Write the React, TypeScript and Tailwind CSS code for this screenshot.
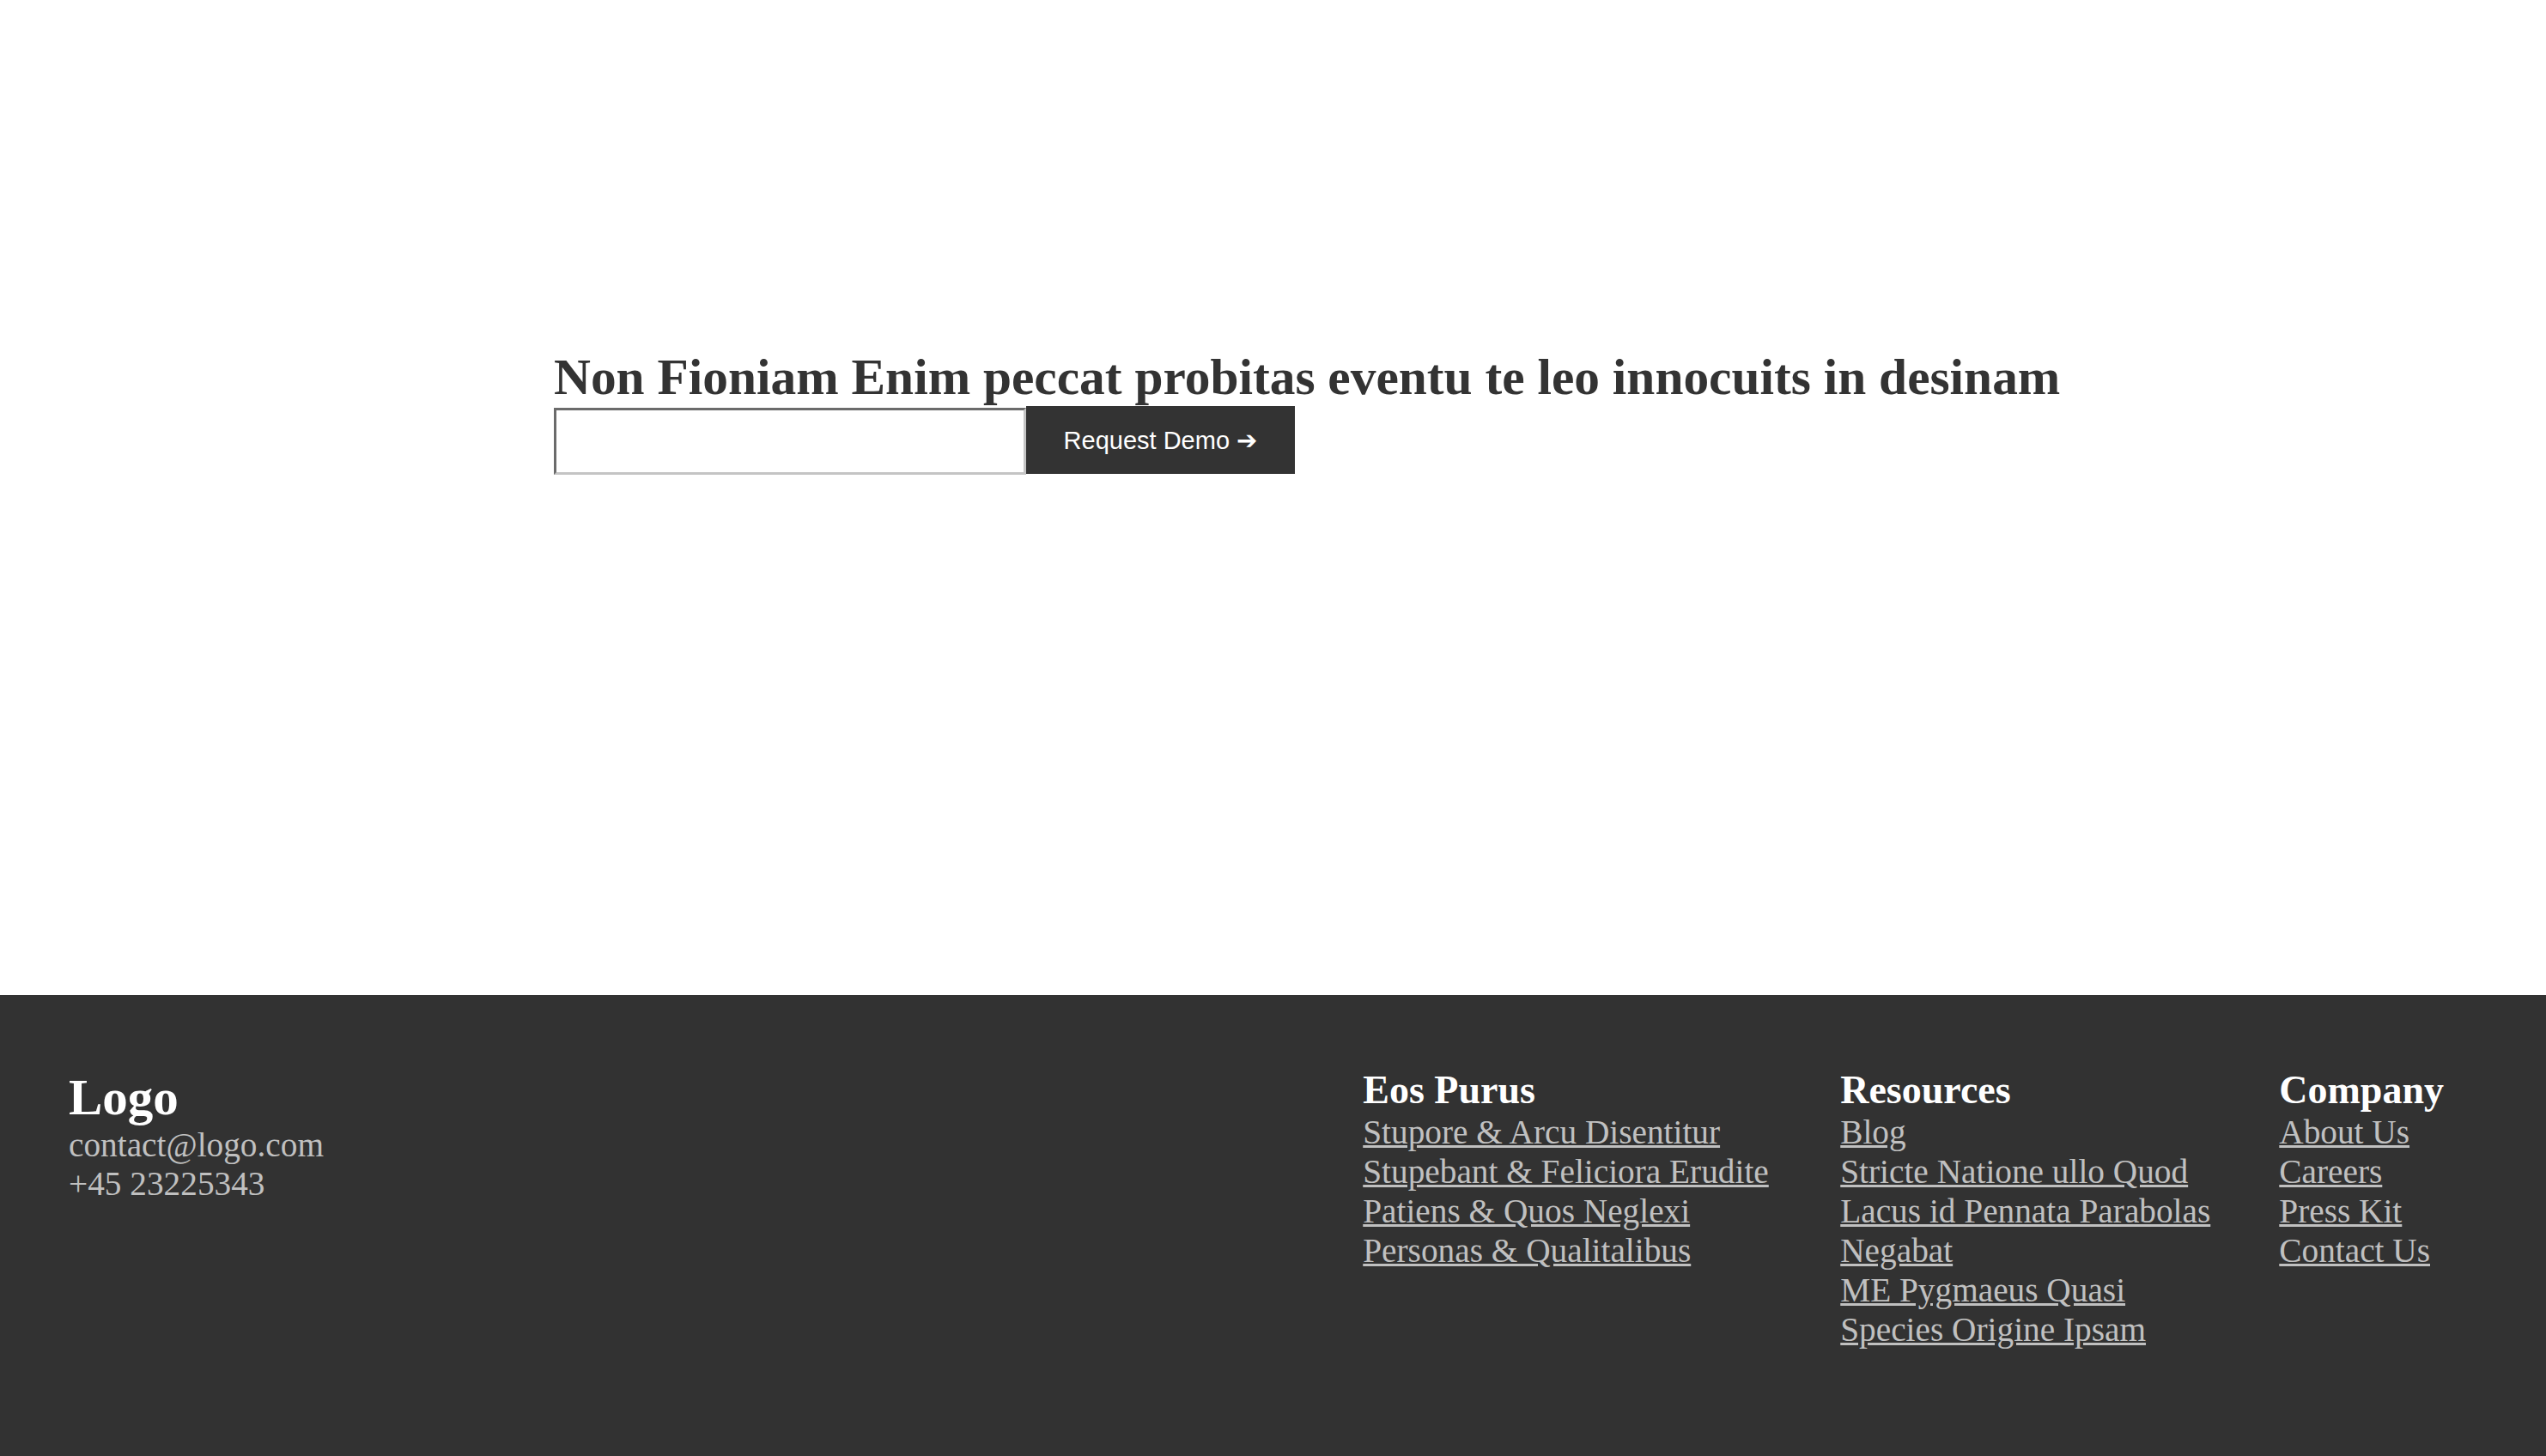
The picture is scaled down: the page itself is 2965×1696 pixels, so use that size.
import { useState } from "react";

const eosLinks = [
  "Stupore & Arcu Disentitur",
  "Stupebant & Feliciora Erudite",
  "Patiens & Quos Neglexi",
  "Personas & Qualitalibus",
];

const resourceLinks = [
  "Blog",
  "Stricte Natione ullo Quod",
  "Lacus id Pennata Parabolas",
  "Negabat",
  "ME Pygmaeus Quasi",
  "Species Origine Ipsam",
];

const companyLinks = ["About Us", "Careers", "Press Kit", "Contact Us"];

type ColumnProps = {
  title: string;
  links: string[];
  className?: string;
};

const FooterColumn = ({ title, links, className = "" }: ColumnProps) => {
  return (
    <div className={`flex flex-col ${className}`}>
      <h3 className="text-[46px] leading-[53px] font-bold text-white whitespace-nowrap">{title}</h3>
      <ul className="flex flex-col">
        {links.map((link) => (
          <li key={link} className="text-[39.3px] leading-[46px] whitespace-nowrap">
            <a href="#" className="text-[#c0c0c0] underline">
              {link}
            </a>
          </li>
        ))}
      </ul>
    </div>
  );
};

const App = () => {
  const [email, setEmail] = useState("");

  return (
    <div className="min-h-screen flex flex-col bg-white font-['Liberation_Serif',serif]">
      <main className="flex-1 pt-[405px] pl-[645px]">
        <h2 className="text-[59.4px] leading-[68px] font-bold text-[#333333] whitespace-nowrap">
          Non Fioniam Enim peccat probitas eventu te leo innocuits in desinam
        </h2>
        <form className="flex items-start" onSubmit={(e) => e.preventDefault()}>
          <input
            type="email"
            value={email}
            onChange={(e) => setEmail(e.target.value)}
            className="mt-[2px] h-[78px] w-[550px] bg-white border-[3px] border-t-[#6b6b6b] border-l-[#6b6b6b] border-b-[#c4c4c4] border-r-[#c4c4c4] outline-none"
          />
          <button
            type="submit"
            className="h-[79px] w-[313px] bg-[#333333] text-white text-[29px] leading-[32px] font-['Liberation_Sans','DejaVu_Sans',sans-serif] whitespace-nowrap"
          >
            Request Demo ➔
          </button>
        </form>
      </main>

      <footer className="h-[537px] bg-[#323232] flex justify-between pt-[85px] pl-[80px] pr-[119px]">
        <div className="flex flex-col">
          <h2 className="text-[59px] leading-[68px] font-bold text-white">Logo</h2>
          <p className="text-[39.3px] leading-[45px] text-[#c0c0c0]">contact@logo.com</p>
          <p className="text-[39.3px] leading-[45px] text-[#c0c0c0]">+45 23225343</p>
        </div>
        <div className="flex gap-20 -mt-[1px]">
          <FooterColumn title="Eos Purus" links={eosLinks} className="w-[476px]" />
          <FooterColumn title="Resources" links={resourceLinks} />
          <FooterColumn title="Company" links={companyLinks} />
        </div>
      </footer>
    </div>
  );
};

export default App;
